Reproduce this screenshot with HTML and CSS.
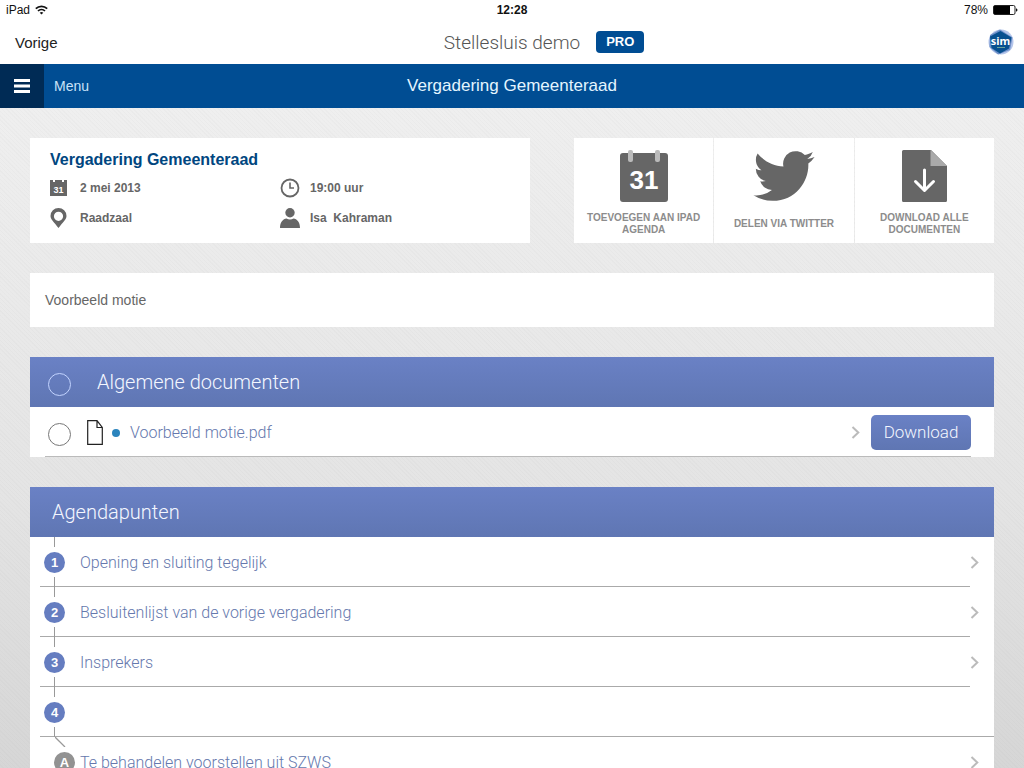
FILE: index.html
```html
<!DOCTYPE html>
<html lang="nl">
<head>
<meta charset="utf-8">
<meta name="viewport" content="width=device-width, initial-scale=1">
<title>Vergadering Gemeenteraad</title>
<link rel="stylesheet" href="styles.css">
</head>
<body>
<div class="app">
  <div class="status">
    <div class="status-left"><span>iPad</span>
      <svg width="13" height="10" viewBox="0 0 13 10" fill="none" stroke="#111" stroke-width="1.7"><path d="M.8 3.7a8.2 8.2 0 0 1 11.4 0M3 6a5 5 0 0 1 7 0"/><path d="M6.5 9.6 4.7 7.8a2.6 2.6 0 0 1 3.6 0z" fill="#111" stroke="none"/></svg>
    </div>
    <strong class="clock">12:28</strong>
    <div class="status-right"><span>78%</span>
      <svg width="25" height="10" viewBox="0 0 25 10"><rect x=".5" y=".5" width="21.500" height="9" rx="1.500" fill="#fff" stroke="#222"/><rect x="1" y="1" width="16" height="8" fill="#000"/><path d="M23 3.200c2 .6 2 3 0 3.600z" fill="#111"/></svg>
    </div>
  </div>
  <header class="brand">
    <a class="back" href="#">Vorige</a>
    <span class="brand-title">Stellesluis demo</span>
    <div class="brand-end">
      <span class="pro">PRO</span>
      <svg width="26" height="26" viewBox="0 0 26 26"><circle cx="13" cy="13" r="12.500" fill="#b4c5ea"/><path d="M12 .5 24.500 8.500 22 21 10 25.500 1.500 18 2 6z" fill="#6d8fc8"/><path d="M12.500 2 23.500 8.500 21 19.500 12 24.500 3.500 19 2 7.500z" fill="#08508f"/><text x="12.500" y="15.500" text-anchor="middle" class="logo-text">sim</text><path d="M9 18.500h8" stroke="#6ba39a"/></svg>
    </div>
  </header>
  <nav class="nav">
    <button class="menu" type="button"><span class="menu-icon"><svg width="16" height="14" viewBox="0 0 16 14" fill="#fff"><path d="M0 0h16v3H0zM0 5.500h16v3H0zM0 11h16v3H0z"/></svg></span><span class="menu-label">Menu</span></button>
    <h1 class="nav-title">Vergadering Gemeenteraad</h1>
  </nav>
  <main class="content">
    <div class="top">
      <section class="card info">
        <h2 class="info-title">Vergadering Gemeenteraad</h2>
        <div class="facts">
          <div class="fact"><span class="fact-icon"><svg width="17" height="18" viewBox="0 0 17 18"><path d="M0 1h3v2h2V1h7v2h2V1h3v16H0z" fill="#666"/><text x="8.500" y="13.500" text-anchor="middle" class="mini-day">31</text></svg></span>2 mei 2013</div>
          <div class="fact"><span class="fact-icon"><svg width="20" height="20" viewBox="0 0 20 20" fill="none" stroke="#666"><circle cx="10" cy="10" r="8.500" stroke-width="1.800"/><path d="M10 4.500V10h4" stroke-width="1.600"/></svg></span>19:00 uur</div>
          <div class="fact"><span class="fact-icon"><svg width="17" height="20" viewBox="0 0 17 20"><path fill="#666" fill-rule="evenodd" d="M8.500 0A8 8 0 0 1 16.500 8c0 3.600-3.500 6-8 12C4 14 .5 11.600.5 8A8 8 0 0 1 8.500 0zm0 3.700a4.600 4.600 0 1 0 0 9.200 4.600 4.600 0 0 0 0-9.200z"/></svg></span>Raadzaal</div>
          <div class="fact"><span class="fact-icon"><svg width="20" height="20" viewBox="0 0 20 20" fill="#666"><circle cx="10" cy="4.700" r="4.700"/><path d="M0 20c0-6 3-9 6.500-9.500 2 1.300 5 1.300 7 0C17 11 20 14 20 20z"/></svg></span>Isa&nbsp; Kahraman</div>
        </div>
      </section>
      <div class="actions">
        <button type="button" class="action">
          <svg width="48" height="52" viewBox="0 0 48 52"><rect y="3" width="48" height="49" rx="3" fill="#666"/><rect x="8" width="5" height="12" rx="2" fill="#bbb"/><rect x="35" width="5" height="12" rx="2" fill="#bbb"/><text x="24" y="39" text-anchor="middle" class="big-day">31</text></svg>
          <span class="action-label">TOEVOEGEN AAN IPAD AGENDA</span>
        </button>
        <button type="button" class="action">
          <svg width="62" height="52" viewBox="0 1.800 24 20.400" fill="#666"><path d="M23.953 4.570a10 10 0 0 1-2.825.775 4.958 4.958 0 0 0 2.163-2.723c-.951.555-2.005.959-3.127 1.184a4.920 4.920 0 0 0-8.384 4.482C7.690 8.095 4.067 6.130 1.640 3.162a4.822 4.822 0 0 0-.666 2.475c0 1.710.870 3.213 2.188 4.096a4.904 4.904 0 0 1-2.228-.616v.060a4.923 4.923 0 0 0 3.946 4.827 4.996 4.996 0 0 1-2.212.085 4.936 4.936 0 0 0 4.604 3.417 9.867 9.867 0 0 1-6.102 2.105c-.390 0-.779-.023-1.170-.067a13.995 13.995 0 0 0 7.557 2.209c9.053 0 13.998-7.496 13.998-13.985 0-.210 0-.420-.015-.630A9.935 9.935 0 0 0 24 4.590z"/></svg>
          <span class="action-label">DELEN VIA TWITTER</span>
        </button>
        <button type="button" class="action">
          <svg width="45" height="52" viewBox="0 0 45 52"><path d="M1.500 0H29l16 16v34.500a1.500 1.500 0 0 1-1.500 1.500h-42A1.500 1.500 0 0 1 0 50.500v-49A1.500 1.500 0 0 1 1.500 0z" fill="#666"/><path d="M28.500 0 45 16H28.500z" fill="#aaa"/><path d="M22.500 20v20M13.500 31.500l9 9 9-9" fill="none" stroke="#fff" stroke-width="3" stroke-linecap="round" stroke-linejoin="round"/></svg>
          <span class="action-label">DOWNLOAD ALLE DOCUMENTEN</span>
        </button>
      </div>
    </div>

    <p class="card note">Voorbeeld motie</p>

    <section class="card">
      <div class="section-head docs-head">
        <input type="checkbox" class="round round-light" id="all"><label for="all">Algemene documenten</label>
      </div>
      <div class="doc">
        <input type="checkbox" class="round" aria-label="Voorbeeld motie.pdf">
        <svg class="file" width="16" height="25" viewBox="0 0 16 25" fill="none" stroke="#222" stroke-width="1.200"><path d="M.7.700H10l5.300 6.800v16.800H.7zM10 .7v6.800h5.300"/></svg>
        <span class="dot"></span>
        <a class="doc-link" href="#">Voorbeeld motie.pdf</a>
        <svg class="chevron" width="9" height="13" viewBox="0 0 9 13"><path d="M1.500 1l5.800 5.500L1.500 12"/></svg>
        <button type="button" class="download">Download</button>
      </div>
    </section>

    <section class="card">
      <h2 class="section-head">Agendapunten</h2>
      <ol class="agenda">
        <li class="row"><a class="row-link" href="#"><span class="track"><i class="seg"></i><b class="num">1</b><i class="seg"></i></span>Opening en sluiting tegelijk</a><span class="row-end"><svg class="chevron" width="9" height="13" viewBox="0 0 9 13"><path d="M1.500 1l5.800 5.500L1.500 12"/></svg></span></li>
        <li class="row"><a class="row-link" href="#"><span class="track"><i class="seg"></i><b class="num">2</b><i class="seg"></i></span>Besluitenlijst van de vorige vergadering</a><span class="row-end"><svg class="chevron" width="9" height="13" viewBox="0 0 9 13"><path d="M1.500 1l5.800 5.500L1.500 12"/></svg></span></li>
        <li class="row"><a class="row-link" href="#"><span class="track"><i class="seg"></i><b class="num">3</b><i class="seg"></i></span>Insprekers</a><span class="row-end"><svg class="chevron" width="9" height="13" viewBox="0 0 9 13"><path d="M1.500 1l5.800 5.500L1.500 12"/></svg></span></li>
        <li class="row"><span class="row-link"><span class="track"><i class="seg"></i><b class="num">4</b><i class="seg"></i></span></span></li>
        <li class="row"><a class="row-link" href="#"><span class="track track-sub"><svg width="20" height="10" viewBox="0 0 20 10" fill="none" stroke="#999" stroke-width="1.300"><path d="M0 0l10 10"/></svg><b class="num num-sub">A</b></span>Te behandelen voorstellen uit SZWS</a><span class="row-end"><svg class="chevron" width="9" height="13" viewBox="0 0 9 13"><path d="M1.500 1l5.800 5.500L1.500 12"/></svg></span></li>
      </ol>
    </section>
  </main>
</div>
</body>
</html>
```
FILE: styles.css
```css
* { box-sizing: border-box; }
body { margin: 0; font-family: "Liberation Sans", Arial, sans-serif; color: #666; }
h1, h2, p, ol { margin: 0; padding: 0; }
a { color: inherit; text-decoration: none; }
button { font-family: inherit; border: 0; padding: 0; cursor: pointer; }
svg { display: block; flex: none; }

.app { height: 100vh; display: flex; flex-direction: column; overflow: hidden; background: #fff; }

.status { display: grid; grid-template-columns: 1fr auto 1fr; align-items: center; height: 20px; padding: 0 6px; font-size: 12px; color: #111; }
.status-left, .status-right { display: flex; align-items: center; gap: 5px; }
.status-right { justify-content: flex-end; }
.clock { font-size: 12px; }

.brand { display: grid; grid-template-columns: 1fr auto 1fr; align-items: center; height: 44px; padding: 0 10px; }
.back { padding-left: 5px; font-size: 15px; color: #222; }
.brand-title { color: #555; font: 300 19px Roboto, sans-serif; }
.brand-end { display: flex; align-items: center; justify-content: space-between; padding-left: 16px; }
.pro { padding: 0 10px; border-radius: 4px; background: #004d93; color: #fff; font-size: 13px; font-weight: bold; line-height: 22px; }
.logo-text { font: bold 11px "Noto Sans", sans-serif; fill: #fff; }

.nav { display: grid; grid-template-columns: 1fr auto 1fr; align-items: center; height: 44px; background: #004d93; flex: none; }
.menu { display: flex; align-items: center; height: 100%; background: none; color: #c8e2f8; font-size: 14px; }
.menu-icon { display: grid; place-items: center; width: 44px; height: 100%; margin-right: 10px; background: #002b55; }
.nav-title { font-size: 17px; font-weight: 400; color: #e4f5ff; }

.content { flex: 1; min-height: 0; overflow-y: auto; scrollbar-width: none; display: flex; flex-direction: column; gap: 30px; padding: 30px 30px 0; background: repeating-linear-gradient(45deg, #0000 0 2px, #00000004 2px 3px), linear-gradient(#efefef, #e4e4e4 60%, #d6d6d6); }
.content > * { flex: none; }
.card { background: #fff; }

.top { display: grid; grid-template-columns: 500fr 420fr; gap: 44px; }
.info { min-height: 105px; padding: 12px 20px 8px; }
.info-title { font-size: 16px; line-height: 20px; color: #004680; }
.facts { display: grid; grid-template-columns: 1fr 1fr; grid-auto-rows: 30px; margin-top: 3px; }
.fact { display: flex; align-items: center; font-size: 12px; font-weight: bold; }
.fact-icon { width: 30px; }
.mini-day { font: bold 9px "Liberation Sans", sans-serif; fill: #fff; }
.actions { display: grid; grid-template-columns: repeat(3, 1fr); gap: 1px; }
.action { display: flex; flex-direction: column; align-items: center; padding: 12px 10px 6px; background: #fff; color: #8c8c8c; }
.action-label { flex: 1; display: flex; align-items: center; margin-top: 8px; font-size: 10px; line-height: 12px; font-weight: bold; text-align: center; }
.big-day { font: bold 26px "Liberation Sans", sans-serif; fill: #fff; }

.note { padding: 17px 15px; font-size: 14px; line-height: 20px; }

.section-head { display: flex; align-items: center; height: 50px; padding: 0 22px; background: linear-gradient(#6a81c5, #5f76b3); color: #f4f7ff; font: 300 20px Roboto, sans-serif; }
.docs-head { padding-left: 18px; gap: 26px; }
.round { appearance: none; flex: none; width: 23px; height: 23px; margin: 4px 0 0; border: 1px solid #777; border-radius: 50%; }
.round-light { border-color: #c3d4ff; }
.round:checked { background: #3b8fc6; }

.doc { display: flex; align-items: center; height: 50px; margin-right: 23px; padding-left: 18px; background: linear-gradient(#bbb, #bbb) 15px 100% / 100% 1px no-repeat; }
.file { margin-left: 16px; }
.dot { width: 8px; height: 8px; margin: 2px 10px 0 9px; border-radius: 50%; background: #2b84bd; }
.doc-link { flex: 1; color: #6578ad; font: 300 16px Roboto, sans-serif; }
.chevron { fill: none; stroke: #bbb; stroke-width: 2; }
.download { height: 35px; margin-left: 11px; width: 100px; border-radius: 5px; background: linear-gradient(#6a81c5, #5f76b3); color: #f4f7ff; font: 300 17px Roboto, sans-serif; }

.agenda { list-style: none; padding-left: 10px; }
.row { display: flex; height: 50px; }
.row-link { flex: 1; display: flex; align-items: center; background: linear-gradient(#aaa, #aaa) 0 100% / 100% 1px no-repeat; color: #6578ad; font: 300 16px Roboto, sans-serif; }
.row-end { display: flex; align-items: center; width: 24px; }
.track { display: flex; flex-direction: column; align-items: center; justify-content: space-between; align-self: stretch; width: 29px; margin-right: 11px; }
.seg { width: 1px; height: 10px; background: #999; }
.num { display: grid; place-items: center; width: 21px; height: 21px; border-radius: 50%; background: #657dc0; color: #fff; font: bold 13px "Liberation Sans", sans-serif; }
.track-sub { align-items: flex-end; justify-content: flex-start; gap: 5px; width: 35px; margin-right: 5px; }
.num-sub { background: #929292; }
```
